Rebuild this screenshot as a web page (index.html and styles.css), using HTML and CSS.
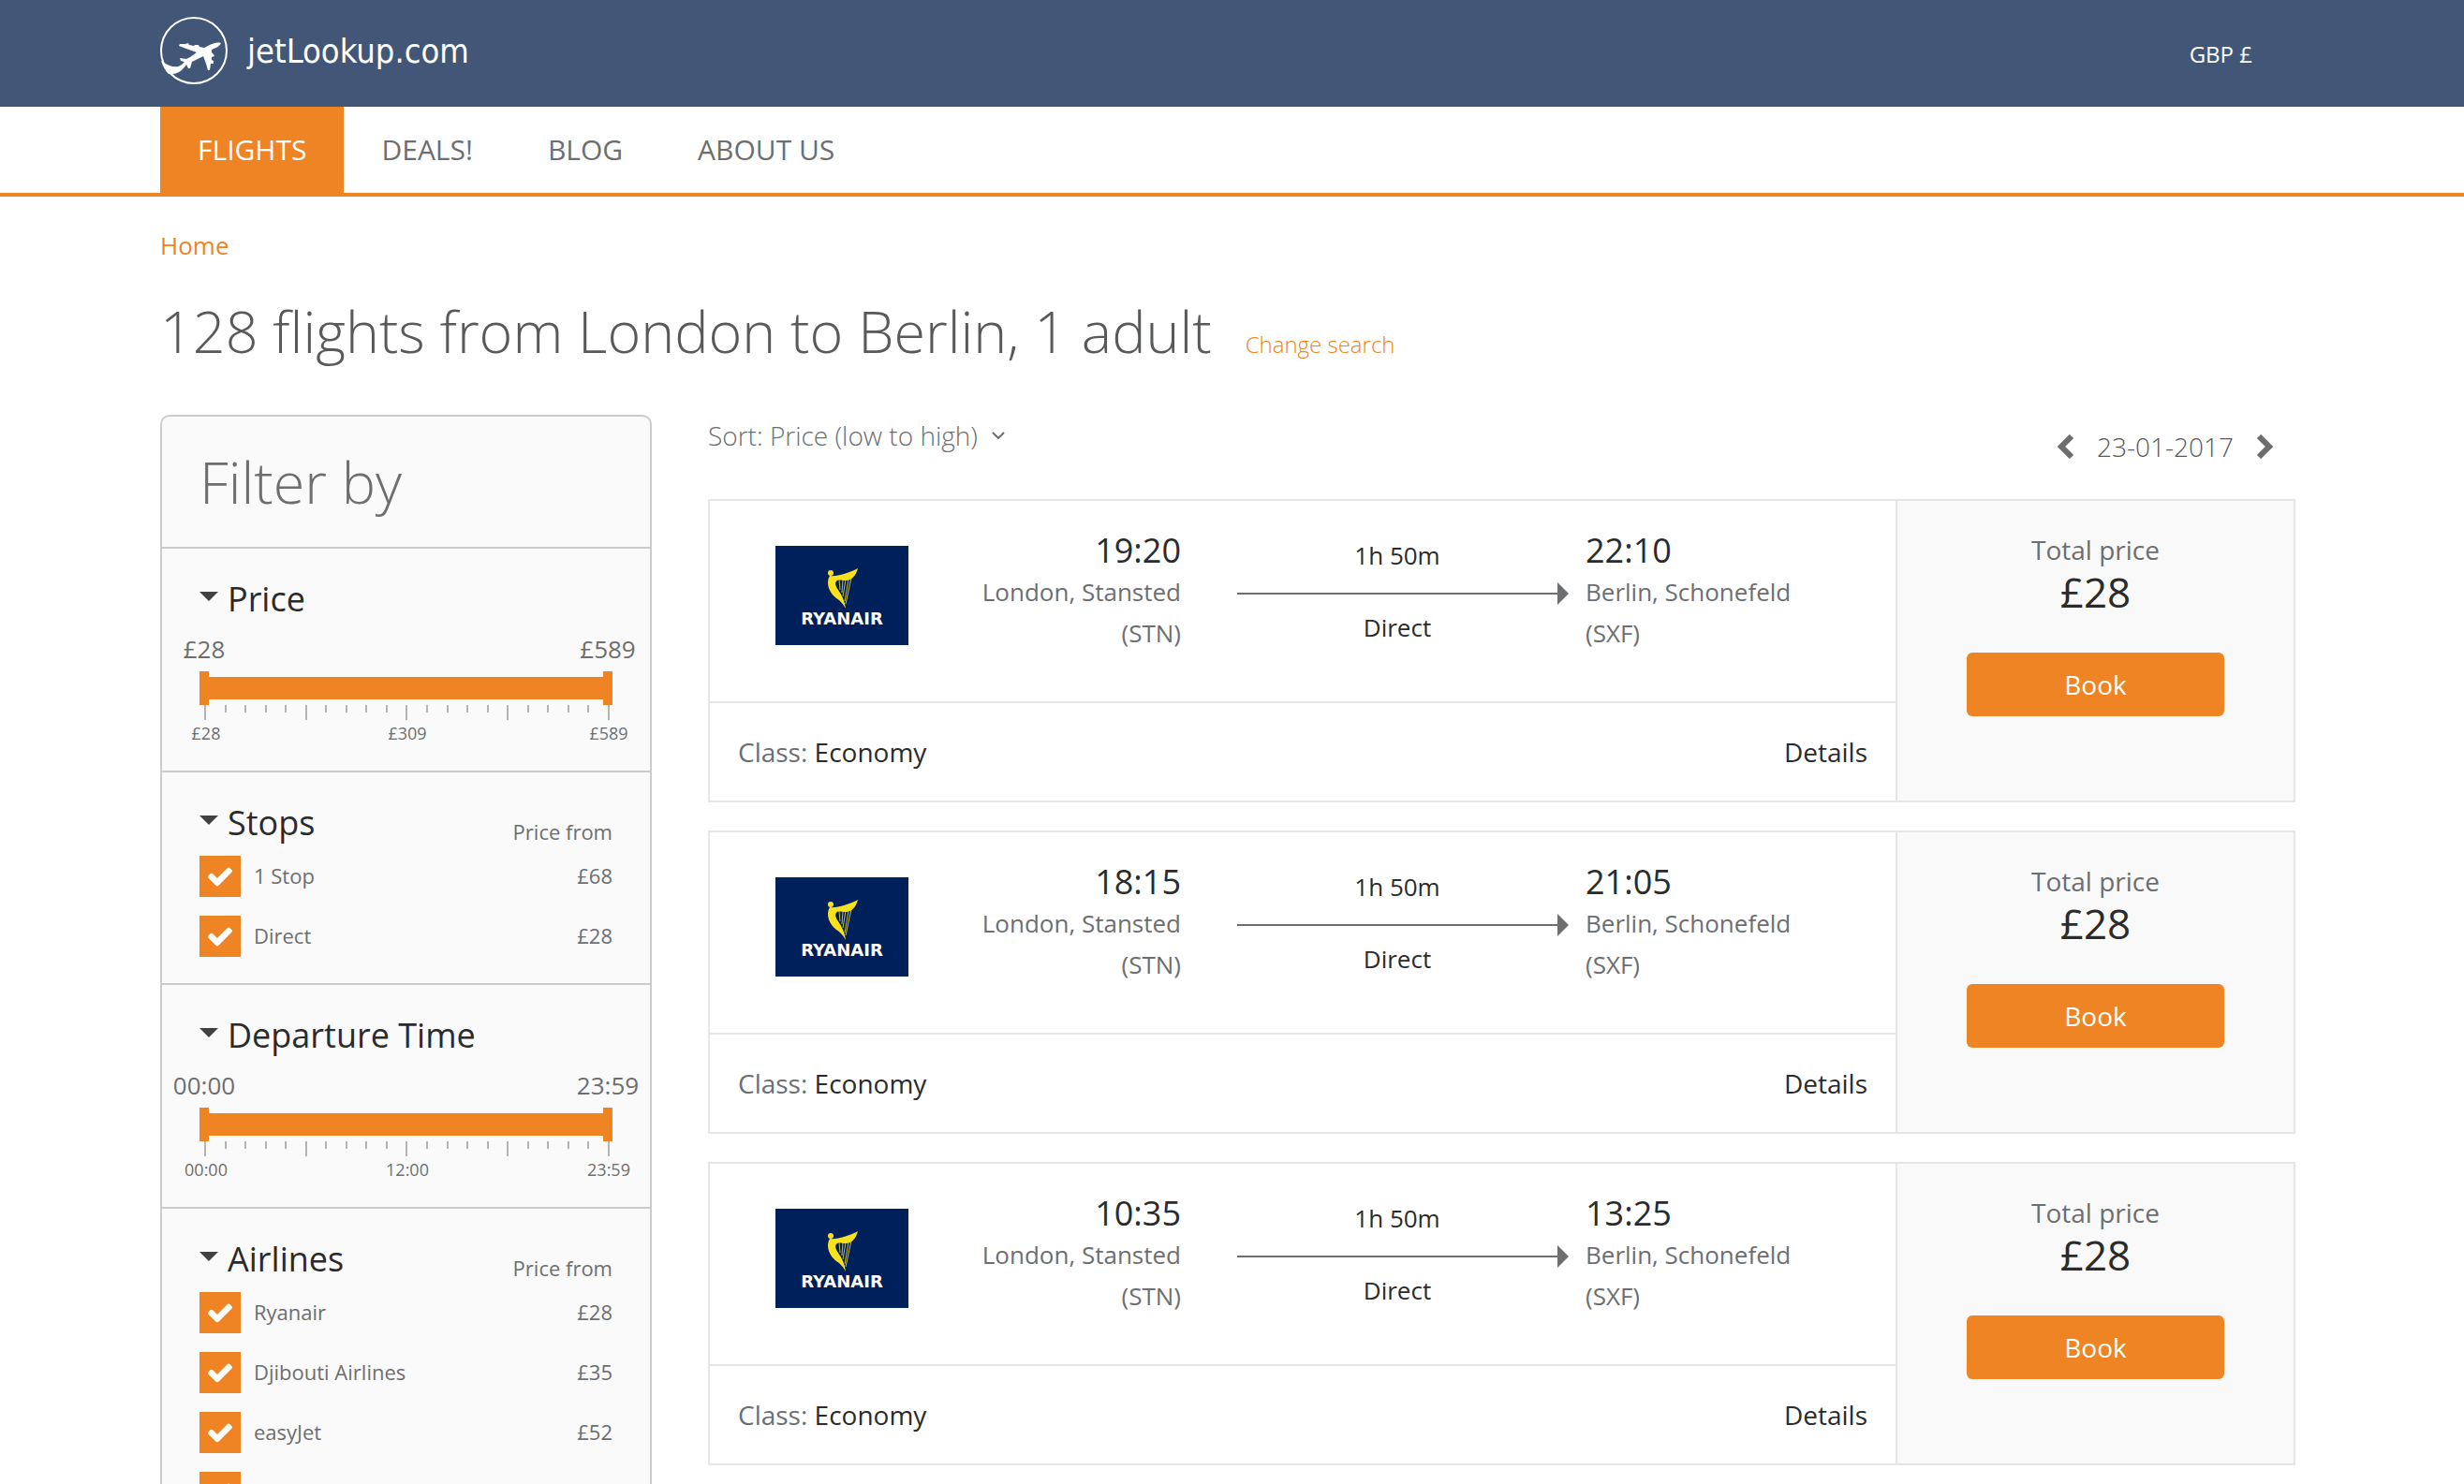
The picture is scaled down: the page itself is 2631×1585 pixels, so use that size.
FILE: index.html
```html
<!DOCTYPE html>
<html lang="en">
<head>
<meta charset="utf-8">
<meta name="viewport" content="width=device-width, initial-scale=1">
<title>London to Berlin flights - jetLookup.com</title>
<link rel="stylesheet" href="styles.css">
</head>
<body>
<svg class="sprite" aria-hidden="true">
  <symbol id="harp" viewBox="0 0 142 106">
    <path fill="#00205b" d="M0 0h142v106H0z"/>
    <circle cx="59" cy="29" r="3" fill="#f9e11e"/>
    <path fill="#f9e11e" d="M58 32C66 33 78 29 88 24C86 32 81 37 75 37C71 37 68 36 66 37C63 39 64 43 67 47C71 53 74 59 75 67C71 60 68 58 65 56C58 51 53 40 58 32Z"/>
    <path fill="none" stroke="#f9e11e" stroke-width="1" stroke-opacity=".8" d="M68 36l1 11M72 36l-1 14M75 36l-3 18M78 36l-4 23M81 34l-6 28"/>
  </symbol>
  <symbol id="arrow-head" viewBox="0 0 12 24"><path d="M0 0l12 12L0 24z" fill="currentColor"/></symbol>
</svg>

<header class="site-header">
  <div class="container header-inner">
    <a class="brand" href="#">
      <svg class="brand-mark" viewBox="0 0 72 72" aria-hidden="true">
        <circle cx="36" cy="36" r="35" fill="none" stroke="#fff" stroke-width="2"/>
        <path fill="#fff" d="M65 28C63 27 58 28 55 29L47 33L42 32L41 30L37 30L36 31L31 30L30 28L27 29L21 29L20 31L28 34L39 38L32 43L28 45L21 44L22 47L26 48L23 51C18 55 11 54 1 47C3 53 6 58 9 61C18 62 23 58 28 51L30 55L32 55L34 48L46 42L49 50L51 57L53 57L54 50L57 50L57 47L55 46L55 43L58 42L57 40L55 38L55 35C60 33 64 31 65 28Z"/>
      </svg>
      <span>jetLookup.com</span>
    </a>
    <a class="currency" href="#">GBP £</a>
  </div>
</header>

<nav class="site-nav">
  <div class="container nav-inner">
    <a class="nav-link active" href="#">FLIGHTS</a>
    <a class="nav-link" href="#">DEALS!</a>
    <a class="nav-link" href="#">BLOG</a>
    <a class="nav-link" href="#">ABOUT US</a>
  </div>
</nav>

<main class="container">
  <a class="crumb" href="#">Home</a>
  <div class="page-title">
    <h1>128 flights from London to Berlin, 1 adult</h1>
    <a href="#">Change search</a>
  </div>

  <div class="columns">
    <aside class="filters">
      <h2>Filter by</h2>
      <section class="filter">
        <h3>Price</h3>
        <div class="range">
          <div class="range-values"><span>£28</span><span>£589</span></div>
          <div class="range-bar">
            <input type="range" min="28" max="589" value="28" aria-label="Lowest price">
            <input type="range" min="28" max="589" value="589" aria-label="Highest price">
          </div>
          <div class="ticks"><i></i><i></i><i></i><i></i><i></i><i></i><i></i><i></i><i></i><i></i><i></i><i></i><i></i><i></i><i></i><i></i><i></i><i></i><i></i><i></i><i></i></div>
          <div class="range-scale"><span>£28</span><span>£309</span><span>£589</span></div>
        </div>
      </section>
      <section class="filter">
        <div class="filter-head"><h3>Stops</h3><span>Price from</span></div>
        <label class="option"><input type="checkbox" checked><span>1 Stop</span><span class="from">£68</span></label>
        <label class="option"><input type="checkbox" checked><span>Direct</span><span class="from">£28</span></label>
      </section>
      <section class="filter">
        <h3>Departure Time</h3>
        <div class="range">
          <div class="range-values"><span>00:00</span><span>23:59</span></div>
          <div class="range-bar">
            <input type="range" min="0" max="1439" value="0" aria-label="Earliest departure">
            <input type="range" min="0" max="1439" value="1439" aria-label="Latest departure">
          </div>
          <div class="ticks"><i></i><i></i><i></i><i></i><i></i><i></i><i></i><i></i><i></i><i></i><i></i><i></i><i></i><i></i><i></i><i></i><i></i><i></i><i></i><i></i><i></i></div>
          <div class="range-scale"><span>00:00</span><span>12:00</span><span>23:59</span></div>
        </div>
      </section>
      <section class="filter">
        <div class="filter-head"><h3>Airlines</h3><span>Price from</span></div>
        <label class="option"><input type="checkbox" checked><span>Ryanair</span><span class="from">£28</span></label>
        <label class="option"><input type="checkbox" checked><span>Djibouti Airlines</span><span class="from">£35</span></label>
        <label class="option"><input type="checkbox" checked><span>easyJet</span><span class="from">£52</span></label>
        <label class="option"><input type="checkbox" checked aria-label="Other airlines"></label>
      </section>
    </aside>

    <div class="results">
      <div class="toolbar">
        <div class="sort">
          <select aria-label="Sort results"><option>Sort: Price (low to high)</option></select>
          <svg viewBox="0 0 14 8" aria-hidden="true"><path d="M1 1l6 6 6-6" fill="none" stroke="currentColor" stroke-width="2"/></svg>
        </div>
        <div class="date">
          <button type="button" aria-label="Previous day"><svg viewBox="0 0 17 26"><path d="M15 2L4 13l11 11" fill="none" stroke="currentColor" stroke-width="6"/></svg></button>
          <span>23-01-2017</span>
          <button type="button" aria-label="Next day"><svg viewBox="0 0 17 26"><path d="M2 2l11 11L2 24" fill="none" stroke="currentColor" stroke-width="6"/></svg></button>
        </div>
      </div>

      <article class="flight">
        <div class="flight-main">
          <div class="leg">
            <svg class="airline" viewBox="0 0 142 106"><use href="#harp"/><text x="71" y="84">RYANAIR</text></svg>
            <div class="stop depart"><strong>19:20</strong><span>London, Stansted<br>(STN)</span></div>
            <div class="route"><span>1h 50m</span><div class="arrow"><svg><use href="#arrow-head"/></svg></div><span>Direct</span></div>
            <div class="stop"><strong>22:10</strong><span>Berlin, Schonefeld<br>(SXF)</span></div>
          </div>
          <div class="flight-foot"><span>Class: <b>Economy</b></span><a href="#">Details</a></div>
        </div>
        <div class="price"><span>Total price</span><strong>£28</strong><button type="button">Book</button></div>
      </article>

      <article class="flight">
        <div class="flight-main">
          <div class="leg">
            <svg class="airline" viewBox="0 0 142 106"><use href="#harp"/><text x="71" y="84">RYANAIR</text></svg>
            <div class="stop depart"><strong>18:15</strong><span>London, Stansted<br>(STN)</span></div>
            <div class="route"><span>1h 50m</span><div class="arrow"><svg><use href="#arrow-head"/></svg></div><span>Direct</span></div>
            <div class="stop"><strong>21:05</strong><span>Berlin, Schonefeld<br>(SXF)</span></div>
          </div>
          <div class="flight-foot"><span>Class: <b>Economy</b></span><a href="#">Details</a></div>
        </div>
        <div class="price"><span>Total price</span><strong>£28</strong><button type="button">Book</button></div>
      </article>

      <article class="flight">
        <div class="flight-main">
          <div class="leg">
            <svg class="airline" viewBox="0 0 142 106"><use href="#harp"/><text x="71" y="84">RYANAIR</text></svg>
            <div class="stop depart"><strong>10:35</strong><span>London, Stansted<br>(STN)</span></div>
            <div class="route"><span>1h 50m</span><div class="arrow"><svg><use href="#arrow-head"/></svg></div><span>Direct</span></div>
            <div class="stop"><strong>13:25</strong><span>Berlin, Schonefeld<br>(SXF)</span></div>
          </div>
          <div class="flight-foot"><span>Class: <b>Economy</b></span><a href="#">Details</a></div>
        </div>
        <div class="price"><span>Total price</span><strong>£28</strong><button type="button">Book</button></div>
      </article>
    </div>
  </div>
</main>
</body>
</html>
```
FILE: styles.css
```css
:root {
  --orange: #ee8423;
  --blue: #425777;
  --grey: #6d6e70;
  --dark: #2b2b2b;
}

* { box-sizing: border-box; }

body {
  margin: 0;
  height: 100vh;
  overflow: hidden;
  background: #fff;
  color: var(--grey);
  font: 400 26px/44px "Open Sans", "Noto Sans", sans-serif;
}

a { color: inherit; text-decoration: none; }
h1, h2, h3 { margin: 0; font-weight: 400; }
button, input, select { font: inherit; color: inherit; margin: 0; }
button { border: 0; background: none; padding: 0; cursor: pointer; }
svg { display: block; }
.sprite { position: absolute; width: 0; height: 0; }

.container { padding: 0 180px 0 171px; }

/* Header */
.site-header { background: var(--blue); color: #fff; }
.header-inner { display: flex; justify-content: space-between; height: 114px; padding-top: 18px; }
.brand {
  display: flex;
  gap: 21px;
  height: 72px;
  line-height: 74px;
  font-family: "DejaVu Sans Condensed", "DejaVu Sans", sans-serif;
  font-stretch: condensed;
  font-size: 36px;
}
.brand-mark { width: 72px; height: 72px; }
.currency { padding: 18px 46px 0 0; font-size: 24px; }

/* Navigation */
.site-nav { border-bottom: 4px solid var(--orange); }
.nav-inner { display: flex; }
.nav-link { padding: 0 40px; font-size: 30px; line-height: 92px; }
.nav-link.active { background: var(--orange); color: #fff; }

/* Title */
.crumb { display: block; margin-top: 30px; color: var(--orange); }
.page-title { display: flex; align-items: baseline; gap: 36px; margin-top: 26px; font-weight: 300; }
.page-title h1 { font-size: 61px; line-height: 88px; font-weight: 300; color: #58595b; }
.page-title a { font-size: 24px; color: var(--orange); }

.columns { display: flex; align-items: flex-start; gap: 60px; margin-top: 45px; }

/* Filters */
.filters {
  flex: 0 0 525px;
  border: 2px solid #ccc;
  border-radius: 10px;
  background: #fafafa;
}
.filters h2 { padding: 26px 40px 25px; font-size: 61px; line-height: 88px; font-weight: 300; }
.filter { padding: 29px 40px 28px; border-top: 2px solid #ccc; }
.filter h3 {
  display: flex;
  gap: 10px;
  font-size: 36px;
  line-height: 50px;
  color: var(--dark);
}
.filter h3::before {
  content: "";
  width: 20px;
  height: 10px;
  margin-top: 17px;
  background: #414042;
  clip-path: polygon(0 0, 100% 0, 50% 100%);
}
.filter-head { display: flex; justify-content: space-between; margin-bottom: 6px; }
.filter-head > span { padding-top: 14px; font-size: 22px; line-height: 40px; }
.option {
  display: flex;
  align-items: flex-start;
  gap: 14px;
  margin-bottom: 20px;
  font-size: 22px;
  line-height: 42px;
}
.option:last-child { margin-bottom: 0; }
.option .from { margin-left: auto; }
.option input {
  appearance: none;
  width: 44px;
  height: 44px;
  background: var(--orange);
}
.option input:checked {
  background: var(--orange) url("data:image/svg+xml,%3Csvg xmlns='http://www.w3.org/2000/svg' viewBox='0 0 1792 1792'%3E%3Cpath fill='%23fff' d='M1671 566q0 40-28 68l-724 724-136 136q-28 28-68 28t-68-28l-136-136-362-362q-28-28-28-68t28-68l136-136q28-28 68-28t68 28l294 295 656-657q28-28 68-28t68 28l136 136q28 28 28 68z'/%3E%3C/svg%3E") center / 30px no-repeat;
}

/* Range sliders */
.range-values, .range-scale { display: flex; justify-content: space-between; }
.range-values { line-height: 36px; margin: 10px 0 6px; }
.range-values span, .range-scale span { display: flex; justify-content: center; width: 10px; white-space: nowrap; }
.range-bar {
  position: relative;
  height: 36px;
  background: linear-gradient(var(--orange), var(--orange)) center / 100% 24px no-repeat;
}
.range-bar input {
  position: absolute;
  inset: 0;
  width: 100%;
  height: 36px;
  appearance: none;
  background: none;
  pointer-events: none;
}
.range-bar input::-webkit-slider-thumb {
  appearance: none;
  width: 10px;
  height: 36px;
  background: var(--orange);
  pointer-events: auto;
}
.ticks { display: flex; justify-content: space-between; height: 16px; padding: 0 3px 0 5px; }
.ticks i { width: 2px; height: 8px; background: #b3b3b3; }
.ticks i:nth-child(5n + 1) { height: 16px; }
.range-scale { padding: 2px 0 0 3px; font-size: 18px; line-height: 24px; }
.range-scale span { width: 8px; }

/* Results */
.results { flex: 1; min-width: 0; }
.toolbar { display: flex; justify-content: space-between; height: 90px; font-size: 28px; font-weight: 300; }
.sort { display: flex; align-items: center; gap: 15px; height: 44px; }
.sort select { appearance: none; border: 0; padding: 0; background: none; }
.sort svg { width: 14px; height: 8px; }
.date { display: flex; align-items: center; gap: 25px; height: 68px; padding-right: 24px; }
.date span { color: #58595b; }
.date svg { width: 17px; height: 26px; }

.flight {
  display: flex;
  margin-bottom: 30px;
  border: 2px solid #e6e6e6;
}
.flight-main { flex: 1; }
.leg { display: flex; height: 216px; padding: 31px 70px 0; border-bottom: 2px solid #e6e6e6; }
.airline { width: 142px; height: 106px; margin-top: 17px; }
.airline text {
  font: 700 18px "DejaVu Sans", sans-serif;
  text-anchor: middle;
  fill: #fff;
}
.stop { flex: 0 0 261px; }
.stop strong { display: block; font-size: 36px; line-height: 44px; font-weight: 400; color: var(--dark); }
.stop.depart { flex-basis: 291px; text-align: right; }
.route { flex: 1; margin: 5px 18px 0 60px; text-align: center; color: var(--dark); }
.route span { display: block; padding-right: 12px; }
.arrow { display: flex; align-items: center; height: 24px; margin: 7px 0 2px; color: var(--grey); }
.arrow::before { content: ""; flex: 1; height: 2px; background: currentColor; }
.arrow svg { width: 12px; height: 24px; }
.flight-foot {
  display: flex;
  justify-content: space-between;
  padding: 30px;
  font-size: 28px;
}
.flight-foot b, .flight-foot a { font-weight: 400; color: var(--dark); }

.price {
  display: flex;
  flex-direction: column;
  align-items: center;
  flex: 0 0 425px;
  padding-top: 30px;
  border-left: 2px solid #e6e6e6;
  background: #f9f9f9;
  font-size: 28px;
}
.price strong { font-size: 44px; line-height: 46px; font-weight: 400; color: var(--dark); }
.price button {
  width: 275px;
  margin-top: 42px;
  border-radius: 6px;
  background: var(--orange);
  color: #fff;
  line-height: 68px;
}
```
